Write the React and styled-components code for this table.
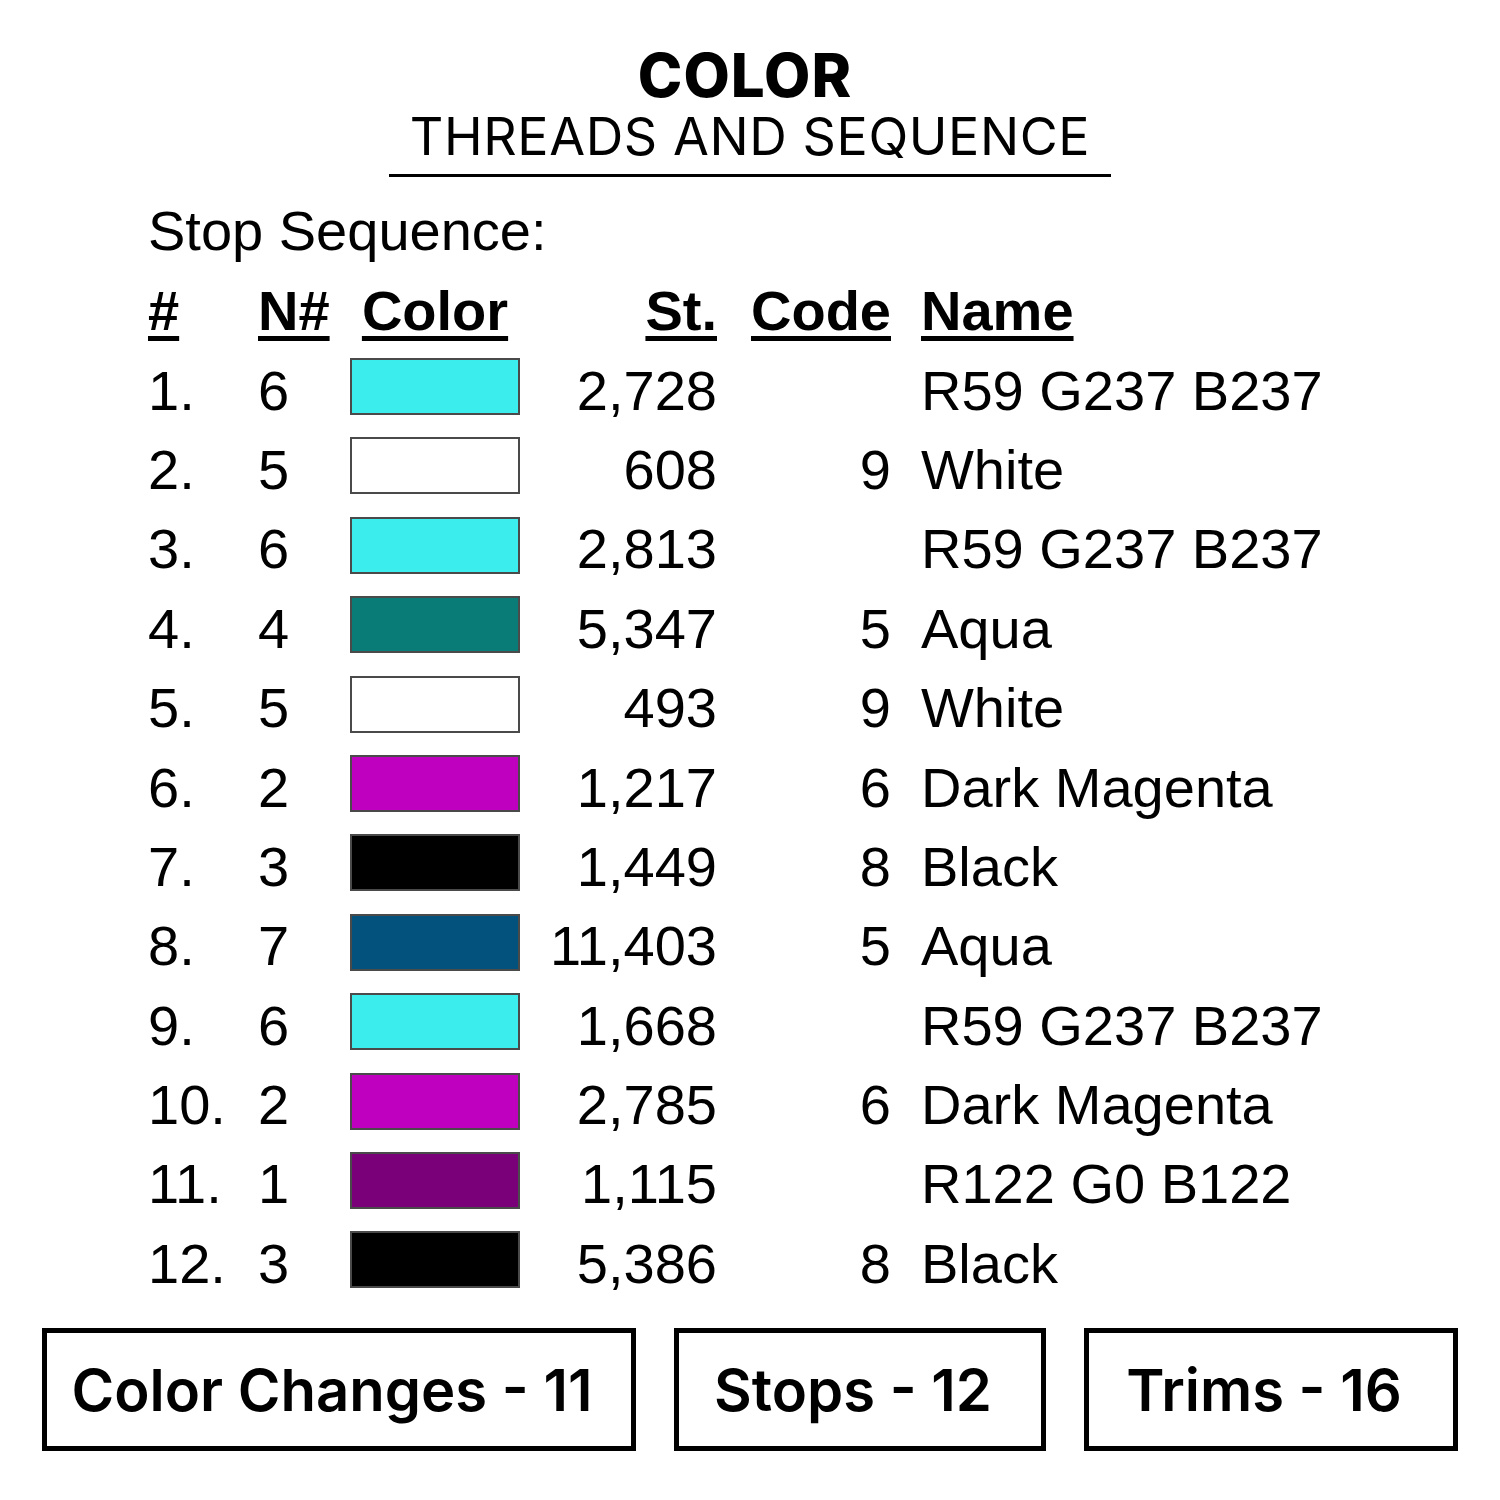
import React from 'react'
import styled, { createGlobalStyle } from 'styled-components'

const GlobalStyle = createGlobalStyle`
  html, body { margin: 0; padding: 0; background: #fff; }
`

const Page = styled.div`
  width: 1500px;
  height: 1500px;
  background: #fff;
  color: #000;
  display: flex;
  flex-direction: column;
  align-items: center;
`

const Header = styled.div`
  display: flex;
  flex-direction: column;
  align-items: center;
  margin-top: 42px;
`

const Title = styled.div`
  font-family: Inter, 'Open Sans', sans-serif;
  font-weight: 800;
  font-size: 60px;
  letter-spacing: 1px;
  line-height: 66px;
  margin-left: -10px;
`

const Subtitle = styled.div`
  font-family: Inter, 'Open Sans', sans-serif;
  font-weight: 400;
  font-size: 52px;
  letter-spacing: 0.6px;
  line-height: 58px;
  padding: 0 21px 8px;
  border-bottom: 3px solid #000;
`

const Sequence = styled.div`
  align-self: stretch;
  padding-left: 148px;
  margin-top: 22px;
  font-family: 'Liberation Sans', Arial, sans-serif;
  font-size: 56px;
`

const Label = styled.div`
  line-height: 64px;
  margin-bottom: 8px;
`

const Grid = styled.div`
  display: grid;
  grid-template-columns: 110px 92px 170px 197px 174px auto;
  grid-auto-rows: 79.4px;
  align-items: center;
`

const Head = styled.div`
  font-weight: 700;
  text-decoration: underline;
  text-decoration-thickness: 5px;
  text-underline-offset: 6px;
  justify-self: ${p => p.$align || 'start'};
  padding-left: ${p => p.$pad || 0}px;
`

const Cell = styled.div`
  justify-self: ${p => p.$align || 'start'};
  padding-left: ${p => p.$pad || 0}px;
`

const Swatch = styled.div`
  width: 170px;
  height: 57px;
  margin-top: -7px;
  box-sizing: border-box;
  border: 2px solid #4a4a4a;
  background: ${p => p.$color};
`

const Footer = styled.div`
  display: flex;
  align-self: stretch;
  padding: 0 42px;
  gap: 38px;
  margin-top: 25px;
`

const StatBox = styled.div`
  flex: 0 0 ${p => p.$w}px;
  height: 123px;
  box-sizing: border-box;
  border: 5px solid #000;
  display: flex;
  align-items: center;
  justify-content: center;
  font-family: Inter, 'Open Sans', sans-serif;
  font-weight: 600;
  font-size: 58px;
  padding-right: 14px;
`

const rows = [
  ['1.', 6, '#3bEDED', '2,728', '', 'R59 G237 B237'],
  ['2.', 5, '#ffffff', '608', '9', 'White'],
  ['3.', 6, '#3bEDED', '2,813', '', 'R59 G237 B237'],
  ['4.', 4, '#0a7c78', '5,347', '5', 'Aqua'],
  ['5.', 5, '#ffffff', '493', '9', 'White'],
  ['6.', 2, '#bf00bf', '1,217', '6', 'Dark Magenta'],
  ['7.', 3, '#000000', '1,449', '8', 'Black'],
  ['8.', 7, '#03527e', '11,403', '5', 'Aqua'],
  ['9.', 6, '#3bEDED', '1,668', '', 'R59 G237 B237'],
  ['10.', 2, '#bf00bf', '2,785', '6', 'Dark Magenta'],
  ['11.', 1, '#7a007a', '1,115', '', 'R122 G0 B122'],
  ['12.', 3, '#000000', '5,386', '8', 'Black'],
]

export default function App() {
  return (
    <Page>
      <GlobalStyle />
      <Header>
        <Title>COLOR</Title>
        <Subtitle>THREADS AND SEQUENCE</Subtitle>
      </Header>
      <Sequence>
        <Label>Stop Sequence:</Label>
        <Grid>
          <Head>#</Head>
          <Head>N#</Head>
          <Head $align="center">Color</Head>
          <Head $align="end">St.</Head>
          <Head $align="end">Code</Head>
          <Head $pad={30}>Name</Head>
          {rows.map(r => (
            <React.Fragment key={r[0]}>
              <Cell>{r[0]}</Cell>
              <Cell>{r[1]}</Cell>
              <Swatch $color={r[2]} />
              <Cell $align="end">{r[3]}</Cell>
              <Cell $align="end">{r[4]}</Cell>
              <Cell $pad={30}>{r[5]}</Cell>
            </React.Fragment>
          ))}
        </Grid>
      </Sequence>
      <Footer>
        <StatBox $w={594}>Color Changes - 11</StatBox>
        <StatBox $w={372}>Stops - 12</StatBox>
        <StatBox $w={374}>Trims - 16</StatBox>
      </Footer>
    </Page>
  )
}
